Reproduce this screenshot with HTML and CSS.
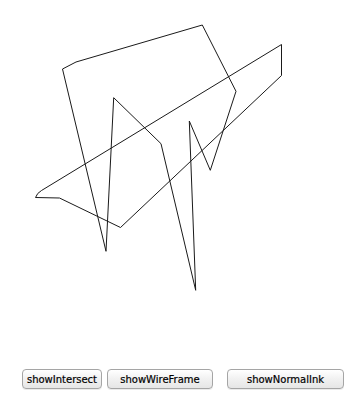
FILE: index.html
```html
<!DOCTYPE html>
<html>
<head>
<meta charset="utf-8">
<link rel="stylesheet" href="styles.css">
</head>
<body>
<div class="page">
  <svg class="canvas" width="355" height="355" viewBox="0 0 355 355">
    <path class="ink" d="M35.5,190.5 Q37,186 41.5,183.5 L281.5,37.5 L281.5,68.5 L120.5,220.5 L59.5,191 Z"/>
    <path class="ink" d="M62.5,62 L76,55 L202.3,18 L236,84.3 L210.3,163.3 L189.3,114 L195.7,283.3 L161,136.7 L113.7,90.7 L106,244.3 Z"/>
  </svg>
  <div class="toolbar">
    <button class="btn btn-intersect">showIntersect</button>
    <button class="btn btn-wire">showWireFrame</button>
    <button class="btn btn-normal">showNormalInk</button>
  </div>
</div>
</body>
</html>
```
FILE: styles.css
```css
html, body {
  margin: 0;
  padding: 0;
  background: #fff;
}
.page {
  width: 355px;
  height: 400px;
  display: flex;
  flex-direction: column;
}
.canvas {
  display: block;
  width: 355px;
  height: 369px;
  flex: none;
}
.ink {
  fill: none;
  stroke: #1a1a1a;
  stroke-width: 1;
  stroke-linejoin: miter;
}
.toolbar {
  display: flex;
  align-items: flex-start;
  padding-left: 22px;
}
.btn {
  height: 20px;
  box-sizing: border-box;
  border: 1px solid #a5a5a5;
  border-radius: 4px;
  background: linear-gradient(#ffffff, #f1f1f1 50%, #e6e6e6);
  font-family: "DejaVu Sans", sans-serif;
  font-size: 10px;
  color: #000;
  -webkit-text-stroke: 0.2px #000;
  padding: 0;
  display: flex;
  align-items: center;
  justify-content: center;
  box-shadow: 0 1px 0 rgba(0,0,0,0.08);
}
.btn-intersect {
  width: 80px;
}
.btn-wire {
  width: 106px;
  margin-left: 5px;
}
.btn-normal {
  width: 117px;
  margin-left: 14px;
}
```
